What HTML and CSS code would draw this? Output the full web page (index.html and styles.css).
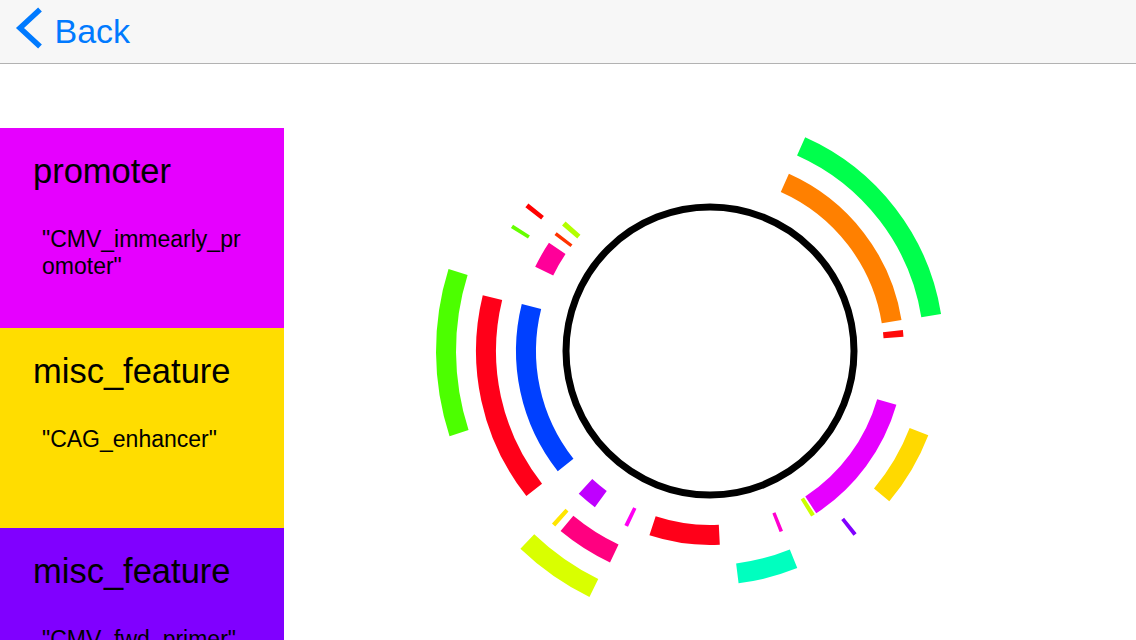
FILE: index.html
```html
<!DOCTYPE html>
<html lang="en">
<head>
<meta charset="utf-8">
<title>Plasmid map</title>
<link rel="stylesheet" href="styles.css">
</head>
<body>
<div class="screen">
  <header class="navbar">
    <a class="back">
      <svg class="chevron" width="30" height="44" viewBox="0 0 30 44"><polyline points="26,3.5 6,22 26,40.5"/></svg>
      <span class="back-label">Back</span>
    </a>
  </header>
  <main class="content">
    <aside class="features">
      <section class="feature feature-promoter">
        <h2 class="feature-type">promoter</h2>
        <p class="feature-label">"CMV_immearly_promoter"</p>
      </section>
      <section class="feature feature-enhancer">
        <h2 class="feature-type">misc_feature</h2>
        <p class="feature-label">"CAG_enhancer"</p>
      </section>
      <section class="feature feature-primer">
        <h2 class="feature-type">misc_feature</h2>
        <p class="feature-label">"CMV_fwd_primer"</p>
      </section>
    </aside>
    <div class="map">
      <svg class="map-svg" width="852" height="576" viewBox="0 0 852 576">
        <g transform="translate(426 287)">
          <circle class="backbone" r="144"/>
          <!-- track 1 -->
          <circle class="arc" r="184" pathLength="360" stroke="#0040ff" stroke-dasharray="52.3 400" transform="rotate(141.7)"/>
          <circle class="arc" r="184" pathLength="360" stroke="#ff8000" stroke-dasharray="56.8 400" transform="rotate(294)"/>
          <circle class="arc" r="184" pathLength="360" stroke="#ff0a0a" stroke-dasharray="2 400" transform="rotate(353.8)"/>
          <circle class="arc" r="184" pathLength="360" stroke="#e600ff" stroke-dasharray="40.7 400" transform="rotate(16.1)"/>
          <circle class="arc" r="184" pathLength="360" stroke="#ccff00" stroke-dasharray="1.3 400" transform="rotate(57.3)"/>
          <circle class="arc" r="184" pathLength="360" stroke="#ff00d0" stroke-dasharray="1.1 400" transform="rotate(67.9)"/>
          <circle class="arc" r="184" pathLength="360" stroke="#ff0019" stroke-dasharray="21.1 400" transform="rotate(87.1)"/>
          <circle class="arc" r="184" pathLength="360" stroke="#ff00f2" stroke-dasharray="1.2 400" transform="rotate(115)"/>
          <circle class="arc" r="184" pathLength="360" stroke="#bf00ff" stroke-dasharray="6.2 400" transform="rotate(126.4)"/>
          <circle class="arc" r="184" pathLength="360" stroke="#ff0099" stroke-dasharray="8.2 400" transform="rotate(205.7)"/>
          <circle class="arc" r="184" pathLength="360" stroke="#ff3300" stroke-dasharray="1.1 400" transform="rotate(216.7)"/>
          <circle class="arc" r="184" pathLength="360" stroke="#b3ff00" stroke-dasharray="1.6 400" transform="rotate(220.3)"/>
          <!-- track 2 -->
          <circle class="arc" r="224" pathLength="360" stroke="#00ff4c" stroke-dasharray="56.9 400" transform="rotate(294)"/>
          <circle class="arc" r="224" pathLength="360" stroke="#ff0019" stroke-dasharray="52.1 400" transform="rotate(141.7)"/>
          <circle class="arc" r="224" pathLength="360" stroke="#ffd900" stroke-dasharray="18.9 400" transform="rotate(21.1)"/>
          <circle class="arc" r="224" pathLength="360" stroke="#8000ff" stroke-dasharray="1 400" transform="rotate(51.2)"/>
          <circle class="arc" r="224" pathLength="360" stroke="#00ffbf" stroke-dasharray="14.9 400" transform="rotate(68.1)"/>
          <circle class="arc" r="224" pathLength="360" stroke="#ff0080" stroke-dasharray="14.4 400" transform="rotate(115.3)"/>
          <circle class="arc" r="224" pathLength="360" stroke="#ffe600" stroke-dasharray="1.1 400" transform="rotate(131.4)"/>
          <circle class="arc" r="224" pathLength="360" stroke="#66ff00" stroke-dasharray="1 400" transform="rotate(211.7)"/>
          <circle class="arc" r="224" pathLength="360" stroke="#ff0000" stroke-dasharray="1.2 400" transform="rotate(217.9)"/>
          <!-- track 3 -->
          <circle class="arc" r="264" pathLength="360" stroke="#4cff00" stroke-dasharray="35.5 400" transform="rotate(161.9)"/>
          <circle class="arc" r="264" pathLength="360" stroke="#d9ff00" stroke-dasharray="17.7 400" transform="rotate(116.1)"/>
        </g>
      </svg>
    </div>
  </main>
</div>
</body>
</html>
```

FILE: styles.css
```css
html, body {
  margin: 0;
  padding: 0;
  background: #ffffff;
}

.screen {
  width: 1136px;
  height: 640px;
  overflow: hidden;
  font-family: "Liberation Sans", Arial, Helvetica, sans-serif;
  color: #000000;
}

.navbar {
  height: 63px;
  background: #f7f7f7;
  border-bottom: 1px solid #b2b2b2;
  display: flex;
  align-items: flex-start;
  padding-left: 14px;
}

.back {
  display: flex;
  align-items: flex-start;
  color: #007aff;
  text-decoration: none;
}

.chevron {
  display: block;
  margin-top: 6px;
}

.chevron polyline {
  fill: none;
  stroke: #007aff;
  stroke-width: 5.5;
  stroke-linejoin: miter;
  stroke-linecap: butt;
}

.back-label {
  margin-left: 10.5px;
  margin-top: 10.5px;
  font-size: 34px;
  line-height: 40px;
}

.content {
  display: flex;
  height: 576px;
}

.features {
  width: 284px;
  flex-shrink: 0;
  padding-top: 64px;
  overflow: hidden;
}

.feature {
  height: 200px;
  box-sizing: border-box;
  padding: 23px 0 0 33px;
}

.feature-promoter { background: #e600ff; }
.feature-enhancer { background: #ffdd00; }
.feature-primer { background: #8000ff; }

.feature-type {
  margin: 0;
  font-size: 34.5px;
  line-height: 40px;
  font-weight: normal;
}

.feature-label {
  margin: 35px 0 0 9px;
  width: 205px;
  font-size: 23px;
  line-height: 27px;
  word-break: break-all;
}

.map {
  flex: 1;
}

.map-svg {
  display: block;
}

.backbone {
  fill: none;
  stroke: #000000;
  stroke-width: 7;
}

.arc {
  fill: none;
  stroke-width: 20;
}
```
